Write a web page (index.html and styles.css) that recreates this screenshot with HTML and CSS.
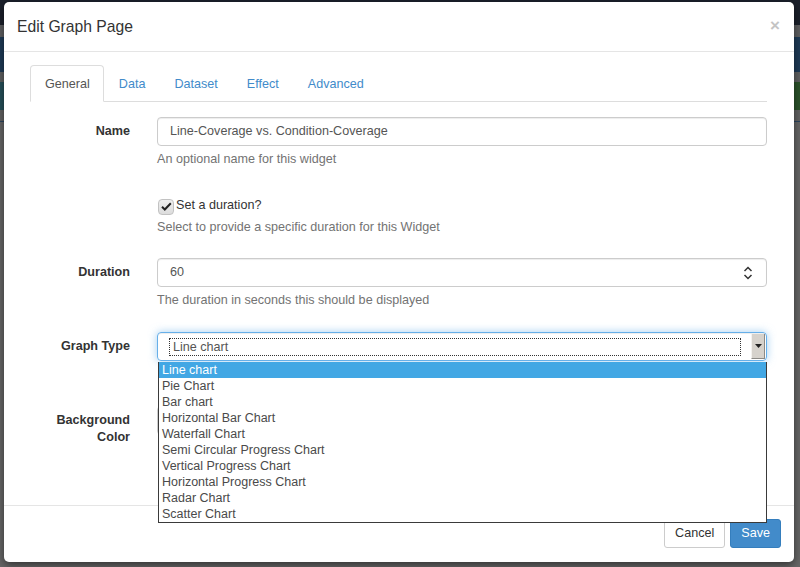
FILE: index.html
```html
<!DOCTYPE html>
<html>
<head>
<meta charset="utf-8">
<title>Edit Graph Page</title>
<link rel="stylesheet" href="styles.css">
</head>
<body>
<div class="backdrop">
  <div class="bg-nav"></div>
  <div class="bg-gap"></div>
  <div class="bg-blue"></div>
  <div class="bg-gap2"></div>
  <div class="bg-row">
    <div class="bg-teal"></div>
    <div class="bg-green"></div>
  </div>
  <div class="bg-rest"></div>
</div>

<div class="modal">
  <div class="modal-header">
    <h4 class="modal-title">Edit Graph Page</h4>
    <span class="close">×</span>
  </div>
  <div class="modal-body">
    <ul class="tabs">
      <li class="tab active">General</li>
      <li class="tab">Data</li>
      <li class="tab">Dataset</li>
      <li class="tab">Effect</li>
      <li class="tab">Advanced</li>
    </ul>

    <div class="form">
      <div class="row">
        <label class="lbl">Name</label>
        <div class="ctl">
          <div class="input">Line-Coverage vs. Condition-Coverage</div>
          <div class="help">An optional name for this widget</div>
        </div>
      </div>

      <div class="row">
        <div class="lbl"></div>
        <div class="ctl">
          <div class="check-line">
            <span class="checkbox">
              <svg width="11" height="9" viewBox="0 0 11 9"><path d="M1 4.8 L3.8 7.5 L9.8 1.2" fill="none" stroke="#222" stroke-width="2"/></svg>
            </span>
            <span>Set a duration?</span>
          </div>
          <div class="help">Select to provide a specific duration for this Widget</div>
        </div>
      </div>

      <div class="row row-dur">
        <label class="lbl">Duration</label>
        <div class="ctl">
          <div class="input input-num">
            <span>60</span>
            <svg class="spin" width="10" height="16" viewBox="0 0 10 16"><path d="M1.5 6 L5 2.5 L8.5 6" fill="none" stroke="#333" stroke-width="1.5"/><path d="M1.5 10 L5 13.5 L8.5 10" fill="none" stroke="#333" stroke-width="1.5"/></svg>
          </div>
          <div class="help">The duration in seconds this should be displayed</div>
        </div>
      </div>

      <div class="row row-type">
        <label class="lbl">Graph Type</label>
        <div class="ctl select-wrap">
          <div class="select">
            <div class="select-focus">Line chart</div>
            <div class="select-btn">
              <svg width="7" height="4" viewBox="0 0 7 4"><path d="M0 0 H7 L3.5 4 Z" fill="#222"/></svg>
            </div>
          </div>
          <ul class="dropdown">
            <li class="opt sel">Line chart</li>
            <li class="opt">Pie Chart</li>
            <li class="opt">Bar chart</li>
            <li class="opt">Horizontal Bar Chart</li>
            <li class="opt">Waterfall Chart</li>
            <li class="opt">Semi Circular Progress Chart</li>
            <li class="opt">Vertical Progress Chart</li>
            <li class="opt">Horizontal Progress Chart</li>
            <li class="opt">Radar Chart</li>
            <li class="opt">Scatter Chart</li>
          </ul>
        </div>
      </div>

      <div class="row">
        <label class="lbl">Background Color</label>
        <div class="ctl">
          <div class="input"></div>
        </div>
      </div>
    </div>
  </div>
  <div class="modal-footer">
    <button class="btn btn-default">Cancel</button>
    <button class="btn btn-primary">Save</button>
  </div>
</div>
</body>
</html>
```

FILE: styles.css
```css
* { box-sizing: border-box; }
html, body { margin: 0; padding: 0; }
body {
  width: 800px;
  height: 567px;
  overflow: hidden;
  position: relative;
  background: #656565;
  font-family: "Liberation Sans", Arial, sans-serif;
  font-size: 12.6px;
  color: #333;
}

/* dimmed page behind the modal */
.backdrop { height: 567px; background: #666; }
.bg-nav { height: 25px; background: #1b202b; }
.bg-gap { height: 12px; background: #5e5f61; }
.bg-blue { height: 35px; background: #1f3b57; }
.bg-gap2 { height: 10px; background: #5f6061; }
.bg-row { display: flex; height: 28px; }
.bg-teal { flex: 1; background: #27505a; }
.bg-green { flex: 1; background: #2c532b; }
.bg-rest { height: 457px; border-top: 11px solid #626262; background: #666; box-shadow: inset 0 1px 0 #2a4560; }

/* modal window */
.modal {
  position: absolute;
  left: 4px;
  top: 2px;
  width: 790px;
  height: 560px;
  background: #fff;
  border-radius: 5px;
  box-shadow: 0 3px 9px rgba(0,0,0,0.5);
  display: flex;
  flex-direction: column;
}

.modal-header {
  height: 50px;
  border-bottom: 1px solid #e5e5e5;
  display: flex;
  align-items: center;
  justify-content: space-between;
  padding: 0 14px 0 13px;
}
.modal-title {
  margin: 0;
  font-size: 15.7px;
  font-weight: normal;
  color: #333;
  line-height: 20px;
}
.close {
  color: #c4c4c4;
  font-weight: bold;
  font-size: 17px;
  line-height: 20px;
  margin-top: -2px;
}

.modal-body {
  flex: 1;
  padding: 13px 27px 0 26px;
  position: relative;
}

/* tabs */
.tabs {
  list-style: none;
  margin: 0;
  padding: 0;
  display: flex;
  border-bottom: 1px solid #ddd;
}
.tab {
  padding: 9px 13px 8px;
  line-height: 18px;
  color: #428bca;
  border: 1px solid transparent;
  border-radius: 4px 4px 0 0;
  margin-right: 1px;
  margin-bottom: -1px;
}
.tab.active {
  color: #555;
  border-color: #ddd;
  border-bottom-color: #fff;
  background: #fff;
  padding-left: 14px;
}

/* form */
.form { padding-top: 15px; }
.row {
  display: grid;
  grid-template-columns: 100px 1fr;
  column-gap: 27px;
  margin-bottom: 22px;
}
.row-dur { margin-bottom: 23px; }
.row-type { margin-bottom: 45px; }
.lbl {
  text-align: right;
  font-weight: bold;
  line-height: 17px;
  padding-top: 6px;
  color: #333;
}
.ctl { min-width: 0; }
.input {
  height: 29px;
  border: 1px solid #ccc;
  border-radius: 4px;
  padding: 0 12px;
  line-height: 27px;
  color: #555;
  box-shadow: inset 0 1px 1px rgba(0,0,0,0.075);
}
.input-num {
  display: flex;
  justify-content: space-between;
  align-items: center;
  padding-right: 13px;
}
.spin { display: block; }
.help {
  margin-top: 4px;
  line-height: 18px;
  color: #737373;
}

.check-line {
  padding-top: 6px;
  height: 24px;
  line-height: 18px;
  display: flex;
  align-items: center;
  gap: 2px;
  color: #333;
}
.checkbox {
  width: 16px;
  height: 16px;
  margin-left: 1px;
  margin-top: 3px;
  border: 1px solid #c2c2c2;
  border-radius: 4px;
  background: linear-gradient(#efefef, #dcdcdc);
  display: flex;
  align-items: center;
  justify-content: center;
}

/* select with open dropdown */
.select-wrap { position: relative; }
.select {
  height: 29px;
  border: 1px solid #66afe9;
  border-radius: 4px;
  box-shadow: inset 0 1px 1px rgba(0,0,0,0.075), 0 0 8px rgba(102,175,233,0.6);
  display: flex;
  align-items: center;
  padding: 0 1px 0 11px;
}
.select-focus {
  flex: 1;
  height: 18px;
  border: 1px dotted #333;
  line-height: 16px;
  padding-left: 3px;
  color: #555;
  margin-right: 10px;
}
.select-btn {
  width: 14px;
  height: 25px;
  background: #d6d2cc;
  border-left: 1px solid #f4f2ef;
  border-bottom: 1px solid #8c8a86;
  border-right: 1px solid #8c8a86;
  display: flex;
  align-items: center;
  justify-content: center;
}
.select-btn svg { display: block; }

.dropdown {
  position: absolute;
  left: 1px;
  right: 0;
  top: 30px;
  margin: 0;
  padding: 0;
  list-style: none;
  background: #fff;
  border: 1px solid #3a3a3a;
  border-top: none;
  z-index: 10;
}
.opt {
  height: 16px;
  line-height: 16px;
  padding-left: 3px;
  font-size: 12.5px;
  color: #4a4a4a;
}
.opt.sel {
  background: #42a7e4;
  color: #fff;
}

/* footer */
.modal-footer {
  height: 57px;
  border-top: 1px solid #e5e5e5;
  padding: 13px 13px 14px;
  display: flex;
  justify-content: flex-end;
  gap: 5px;
}
.btn {
  height: 29px;
  padding: 0 10px;
  border-radius: 3px;
  font-family: "Liberation Sans", Arial, sans-serif;
  font-size: 12.6px;
  line-height: 27px;
  border: 1px solid #ccc;
  background: #fff;
  color: #333;
}
.btn-primary {
  background: #428bca;
  border-color: #357ebd;
  color: #fff;
}
```
